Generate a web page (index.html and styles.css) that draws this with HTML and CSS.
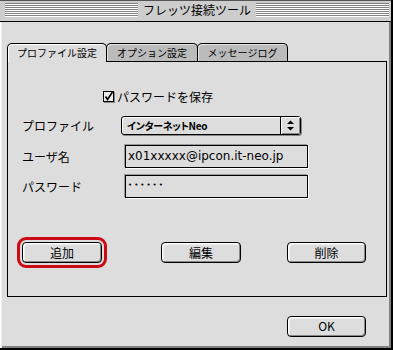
FILE: index.html
```html
<!DOCTYPE html>
<html lang="ja">
<head>
    <meta charset="UTF-8">
    <title>フレッツ接続ツール</title>
    <link rel="stylesheet" href="styles.css">
</head>
<body>

<div class="window">
    <div class="titlebar">
        <span class="stripes"></span>
        <span class="title">フレッツ接続ツール</span>
        <span class="stripes"></span>
    </div>

    <div class="content">
        <div class="tabs">
            <div class="tab tab-1 active">プロファイル設定</div>
            <div class="tab tab-2">オプション設定</div>
            <div class="tab tab-3">メッセージログ</div>
        </div>

        <div class="panel">
            <label class="check-row">
                <svg class="checkbox" width="12" height="12" viewBox="0 0 12 12">
                    <rect x="1" y="1" width="11" height="11" fill="#888"/>
                    <rect x="0.5" y="0.5" width="10" height="10" fill="#eee" stroke="#000"/>
                    <path d="M2.5 5.5 L4.5 8.5 L9.5 1" fill="none" stroke="#000" stroke-width="1.6"/>
                </svg>
                <span>パスワードを保存</span>
            </label>

            <div class="row row-popup">
                <span class="label">プロファイル</span>
                <div class="popup">
                    <span class="popup-text">インターネットNeo</span>
                    <span class="popup-arrows">
                        <svg width="19" height="17" viewBox="0 0 19 17">
                            <path d="M6 7 L9.5 3.5 L13 7 Z" fill="#000"/>
                            <path d="M6 10 L9.5 13.5 L13 10 Z" fill="#000"/>
                        </svg>
                    </span>
                </div>
            </div>

            <div class="row row-user">
                <span class="label">ユーザ名</span>
                <div class="field">x01xxxxx@ipcon.it-neo.jp</div>
            </div>

            <div class="row row-pass">
                <span class="label">パスワード</span>
                <div class="field field-pass">••••••</div>
            </div>

            <div class="buttons">
                <button class="btn btn-add selected">追加</button>
                <button class="btn btn-edit">編集</button>
                <button class="btn btn-del">削除</button>
            </div>
        </div>

        <div class="footer">
            <button class="btn btn-ok">OK</button>
        </div>
    </div>
</div>

</body>
</html>
```

FILE: styles.css
```css
body{
    margin: 0;
    font-family: "Noto Sans CJK JP", sans-serif;
    color: #000;
}

.window{
    width: 393px;
    height: 350px;
    box-sizing: border-box;
    border-right: 2px solid #000;
    border-bottom: 2px solid #000;
    background: #ddd;
    display: flex;
    flex-direction: column;
}

/* title bar */
.titlebar{
    height: 22px;
    box-sizing: border-box;
    display: flex;
    align-items: center;
    gap: 5px;
    padding: 0 2px 1px 5px;
    background: #cdcdcd;
    border-bottom: 1px solid #000;
    box-shadow: inset 0 1px #555;
}
.stripes{
    flex: 1;
    height: 14px;
    background: repeating-linear-gradient(to bottom, #808080 0 1px, #fff 1px 2px);
}
.title{
    font-size: 12px;
    line-height: 14px;
}

/* content */
.content{
    flex: 1;
    box-shadow: inset 1px 0 #fff, inset 2px 0 #eee, inset -2px -2px #808080;
}

.tabs{
    display: flex;
    margin: 21px 0 0 7px;
    height: 18px;
}
.tab{
    box-sizing: border-box;
    height: 18px;
    border: 1px solid #000;
    border-bottom: none;
    border-radius: 5px 5px 0 0;
    background: #bbb;
    font-size: 10px;
    line-height: 17px;
    text-align: center;
    box-shadow: inset 1px 1px #e6e6e6;
}
.tab + .tab{
    margin-left: -1px;
}
.tab-1{ width: 100px; }
.tab-2{ width: 92px; }
.tab-3{ width: 91px; }
.tab.active{
    position: relative;
    z-index: 1;
    height: 19px;
    background: #ddd;
    box-shadow: inset 1px 1px #fff;
}

.panel{
    box-sizing: border-box;
    width: 380px;
    height: 236px;
    margin-left: 7px;
    border: 1px solid #000;
}

.check-row{
    display: flex;
    align-items: center;
    height: 12px;
    margin-top: 29px;
    padding-left: 95px;
    font-size: 12px;
    line-height: 12px;
}
.checkbox{
    margin-right: 2px;
}

.row{
    display: flex;
    align-items: center;
    padding-left: 14px;
    font-size: 12px;
}
.label{
    width: 99px;
    line-height: 14px;
}
.row-popup{
    margin-top: 13px;
    height: 19px;
}
.row-user{
    margin-top: 10px;
    height: 23px;
}
.row-pass{
    margin-top: 7px;
    height: 23px;
}

.popup{
    box-sizing: border-box;
    width: 180px;
    height: 19px;
    display: flex;
    border: 1px solid #000;
    border-radius: 3px;
    background: #ddd;
    box-shadow: inset 1px 1px #fff, 1px 1px #888;
}
.popup-text{
    flex: 1;
    padding-left: 5px;
    font-size: 10px;
    line-height: 17px;
    font-weight: bold;
    font-feature-settings: "palt";
    letter-spacing: -0.3px;
}
.popup-arrows{
    width: 19px;
    border-left: 1px solid #000;
    box-shadow: inset 1px 1px #fff, inset -1px -1px #888;
}
.popup-arrows svg{
    display: block;
}

.field{
    box-sizing: border-box;
    width: 183px;
    height: 23px;
    margin-left: 4px;
    padding-left: 2px;
    border: 1px solid #000;
    box-shadow: -1px -1px #999, 1px 1px #fff;
    font-family: "DejaVu Sans", sans-serif;
    font-size: 12px;
    line-height: 21px;
}
.field-pass{
    font-size: 7px;
    letter-spacing: 2px;
    line-height: 19px;
}

/* buttons */
.buttons{
    display: flex;
    margin-top: 44px;
    padding-left: 14px;
}
.btn{
    box-sizing: border-box;
    width: 80px;
    height: 21px;
    padding: 0;
    border: 1px solid #000;
    border-radius: 4px;
    background: #ddd;
    box-shadow: inset 1px 1px #fff, inset -1px -1px #888, inset 2px 2px #eee;
    font-family: "Noto Sans CJK JP", sans-serif;
    font-size: 12px;
    line-height: 18px;
    color: #000;
}
.btn-edit{ margin-left: 59px; }
.btn-del{ margin-left: 46px; width: 79px; }
.btn-ok{ width: 79px; }
.btn.selected{
    outline: 3px solid #cc0a14;
    outline-offset: 2px;
}

.footer{
    margin-top: 15px;
    padding-left: 287px;
}
```
